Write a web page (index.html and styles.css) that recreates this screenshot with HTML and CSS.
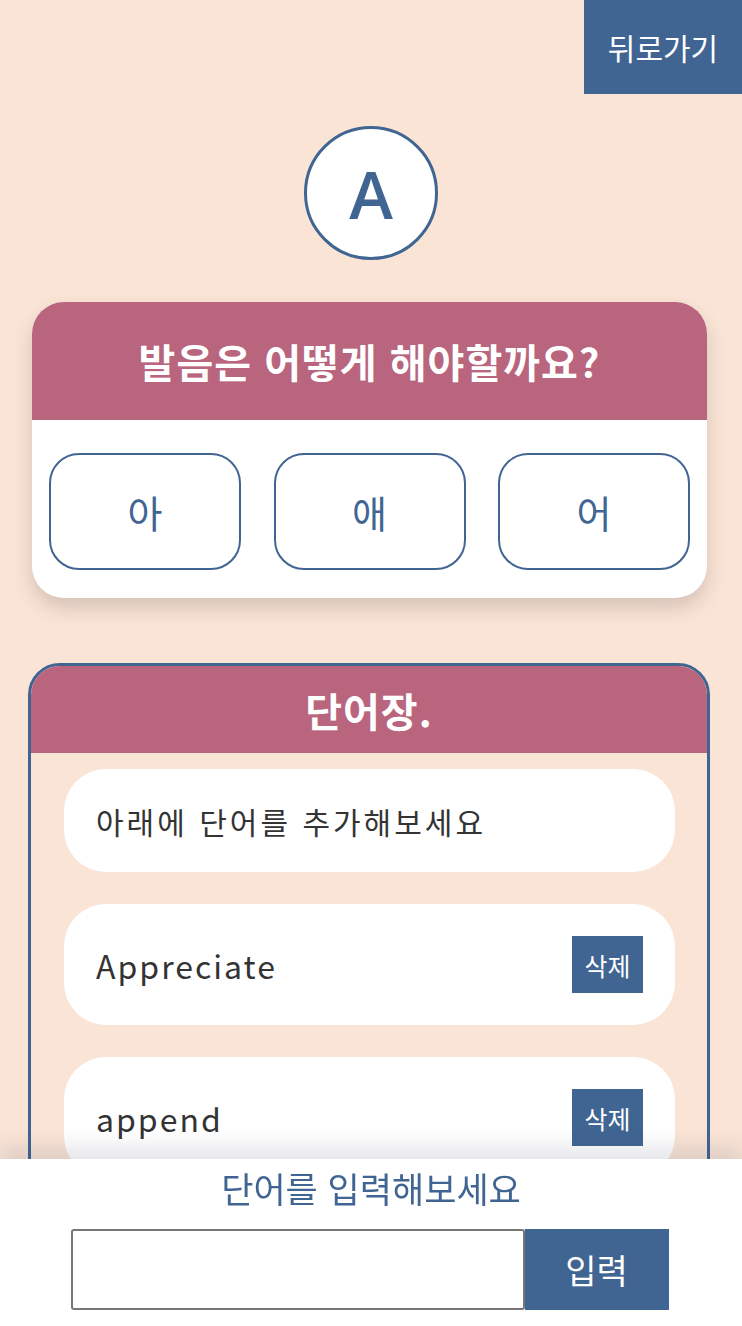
FILE: index.html
```html
<!DOCTYPE html>
<html lang="ko">
<head>
    <meta charset="UTF-8">
    <meta name="viewport" content="width=device-width, initial-scale=1.0">
    <title>발음 연습</title>
    <link rel="stylesheet" href="styles.css">
</head>
<body>
    <div class="top-bar">
        <button class="back-btn">뒤로가기</button>
    </div>

    <!-- Letter -->
    <div class="letter-wrap">
        <div class="letter">A</div>
    </div>

    <!-- Quiz Section -->
    <div class="quiz-card">
        <h2 class="quiz-title">발음은 어떻게 해야할까요?</h2>
        <div class="quiz-options">
            <button class="option">아</button>
            <button class="option">애</button>
            <button class="option">어</button>
        </div>
    </div>

    <!-- Word List Section -->
    <div class="word-card">
        <h2 class="word-title">단어장.</h2>
        <div class="word-list">
            <div class="word-item hint">아래에 단어를 추가해보세요</div>
            <div class="word-item">
                <span class="word">Appreciate</span>
                <button class="delete-btn">삭제</button>
            </div>
            <div class="word-item">
                <span class="word">append</span>
                <button class="delete-btn">삭제</button>
            </div>
        </div>
    </div>

    <!-- Input Bar -->
    <div class="input-bar">
        <p class="input-label">단어를 입력해보세요</p>
        <div class="input-row">
            <input type="text" class="word-input">
            <button class="add-btn">입력</button>
        </div>
    </div>
</body>
</html>
```

FILE: styles.css
```css
body {
    margin: 0;
    background-color: #fae4d6;
    font-family: "Noto Sans CJK KR", "Noto Sans", sans-serif;
    padding-bottom: 200px;
}
button {
    font-family: inherit;
    cursor: pointer;
}
.top-bar {
    display: flex;
    justify-content: flex-end;
}
.back-btn {
    width: 158px;
    height: 94px;
    background-color: #416593;
    color: white;
    border: none;
    font-size: 30px;
    padding: 0;
}
.letter-wrap {
    display: flex;
    justify-content: center;
    margin-top: 32px;
}
.letter {
    width: 128px;
    height: 128px;
    border: 3px solid #416593;
    border-radius: 50%;
    background-color: white;
    color: #416593;
    font-family: "Open Sans", sans-serif;
    font-weight: 600;
    font-size: 66px;
    display: flex;
    align-items: center;
    justify-content: center;
}
.quiz-card {
    margin: 42px 35px 0 32px;
    background-color: white;
    border-radius: 32px;
    overflow: hidden;
    box-shadow: 0 10px 20px rgba(0, 0, 0, 0.15);
}
.quiz-title {
    margin: 0;
    height: 118px;
    background-color: #b8657d;
    color: white;
    font-size: 40px;
    letter-spacing: 1px;
    font-weight: 700;
    display: flex;
    align-items: center;
    justify-content: center;
}
.quiz-options {
    display: flex;
    justify-content: space-between;
    padding: 33px 17px 28px;
}
.option {
    width: 192px;
    height: 117px;
    border: 2px solid #416593;
    border-radius: 30px;
    background-color: white;
    color: #416593;
    font-size: 38px;
}
.word-card {
    margin: 65px 32px 0 28px;
    border: 3px solid #416593;
    border-radius: 32px;
    overflow: hidden;
}
.word-title {
    margin: 0;
    height: 87px;
    background-color: #b8657d;
    color: white;
    font-size: 40px;
    letter-spacing: 1px;
    font-weight: 700;
    display: flex;
    align-items: center;
    justify-content: center;
}
.word-list {
    display: flex;
    flex-direction: column;
    gap: 32px;
    padding: 16px 32px 32px 33px;
}
.word-item {
    background-color: white;
    border-radius: 42px;
    height: 121px;
    padding: 0 32px;
    display: flex;
    align-items: center;
    justify-content: space-between;
    color: #333;
    font-size: 32px;
    letter-spacing: 2px;
}
.word-item.hint {
    height: 103px;
    font-size: 30px;
    letter-spacing: 3px;
}
.delete-btn {
    width: 71px;
    height: 57px;
    background-color: #416593;
    color: white;
    border: none;
    font-size: 25px;
    letter-spacing: 0;
    padding: 0;
}
.input-bar {
    position: fixed;
    left: 0;
    right: 0;
    bottom: 0;
    height: 167px;
    background-color: white;
    box-shadow: 0 -12px 20px rgba(30, 40, 70, 0.12);
    text-align: center;
}
.input-label {
    margin: 6px 0 0;
    color: #416593;
    font-size: 35px;
    line-height: 46px;
}
.input-row {
    display: flex;
    justify-content: center;
    margin-top: 18px;
    padding-right: 3px;
}
.word-input {
    width: 450px;
    height: 77px;
    border: 2px solid #777;
    border-radius: 3px;
    padding: 0;
    margin: 0;
}
.add-btn {
    width: 144px;
    height: 81px;
    background-color: #416593;
    color: white;
    border: none;
    font-size: 34px;
    padding: 0;
}
```
